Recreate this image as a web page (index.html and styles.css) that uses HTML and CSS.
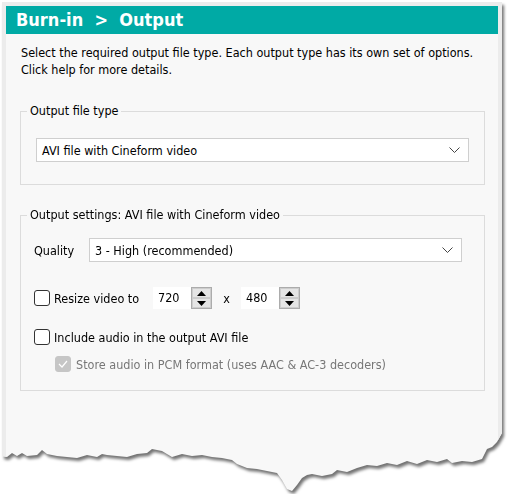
FILE: index.html
```html
<!DOCTYPE html>
<html lang="en">
<head>
    <meta charset="UTF-8">
    <title>Burn-in &gt; Output</title>
    <link rel="stylesheet" href="styles.css">
</head>
<body>

<div class="shadow">
    <div class="panel">
        <div class="header">Burn-in &nbsp;&gt;&nbsp; Output</div>

        <p class="intro">Select the required output file type. Each output type has its own set of options.<br>Click help for more details.</p>

        <fieldset class="group group-type">
            <legend>Output file type</legend>
            <div class="combo combo-type">
                <span>AVI file with Cineform video</span>
                <svg class="chevron" width="11" height="6" viewBox="0 0 11 6"><path d="M0.5 0.5 L5.5 5.5 L10.5 0.5" fill="none" stroke="#444" stroke-width="1"/></svg>
            </div>
        </fieldset>

        <fieldset class="group group-settings">
            <legend>Output settings: AVI file with Cineform video</legend>

            <div class="row quality-row">
                <label class="quality-label">Quality</label>
                <div class="combo combo-quality">
                    <span>3 - High (recommended)</span>
                    <svg class="chevron" width="11" height="6" viewBox="0 0 11 6"><path d="M0.5 0.5 L5.5 5.5 L10.5 0.5" fill="none" stroke="#444" stroke-width="1"/></svg>
                </div>
            </div>

            <div class="row resize-row">
                <span class="check"></span>
                <span class="check-text">Resize video to</span>
                <div class="spin">
                    <span class="spin-value">720</span>
                    <div class="spin-btns">
                        <div class="spin-btn"><svg width="9" height="5" viewBox="0 0 9 5"><path d="M0 5 L4.5 0 L9 5 Z" fill="#000"/></svg></div>
                        <div class="spin-btn"><svg width="9" height="5" viewBox="0 0 9 5"><path d="M0 0 L4.5 5 L9 0 Z" fill="#000"/></svg></div>
                    </div>
                </div>
                <span class="times">x</span>
                <div class="spin">
                    <span class="spin-value">480</span>
                    <div class="spin-btns">
                        <div class="spin-btn"><svg width="9" height="5" viewBox="0 0 9 5"><path d="M0 5 L4.5 0 L9 5 Z" fill="#000"/></svg></div>
                        <div class="spin-btn"><svg width="9" height="5" viewBox="0 0 9 5"><path d="M0 0 L4.5 5 L9 0 Z" fill="#000"/></svg></div>
                    </div>
                </div>
            </div>

            <div class="row audio-row">
                <span class="check"></span>
                <span class="check-text">Include audio in the output AVI file</span>
            </div>

            <div class="row pcm-row">
                <span class="check check-disabled"><svg width="10" height="8" viewBox="0 0 10 8"><path d="M1 4 L4 7 L9 1" fill="none" stroke="#fff" stroke-width="1.2"/></svg></span>
                <span class="check-text disabled">Store audio in PCM format (uses AAC &amp; AC-3 decoders)</span>
            </div>
        </fieldset>
    </div>
</div>

</body>
</html>
```

FILE: styles.css
```css
body {
    margin: 0;
    background-color: #fff;
    font-family: "DejaVu Sans Condensed", "DejaVu Sans", sans-serif;
    font-size: 12.5px;
    color: #000;
}
.shadow {
    margin: 2px 0 0 2px;
    width: 500px;
    filter: drop-shadow(2px 3px 1.5px rgba(0, 0, 0, 0.55));
}
.panel {
    height: 492px;
    background-color: #f8f8f8;
    border: 4px solid #ececec;
    border-bottom: none;
    box-sizing: border-box;
    clip-path: polygon(0 0, 100% 0, 100% 431px, 99% 440px, 98% 445px, 97% 447px, 96% 457px, 94% 460px, 92% 459px, 90% 461px, 89% 457px, 87% 460px, 85% 458px, 83% 462px, 81% 459px, 79% 463px, 77% 461px, 75% 464px, 73% 463px, 71% 466px, 69% 470px, 67% 468px, 66% 472px, 64% 474px, 62% 472px, 61% 473px, 60% 476px, 59% 483px, 58% 489px, 57% 487px, 56% 478px, 55% 471px, 53% 469px, 51% 467px, 49% 466px, 47% 462px, 46% 458px, 44% 456px, 42% 455px, 40% 453px, 38% 454px, 36% 452px, 34% 455px, 32% 449px, 30% 447px, 29% 451px, 27% 452px, 25% 455px, 23% 454px, 21% 453px, 20% 452px, 19% 455px, 17% 453px, 15% 456px, 13% 455px, 11% 454px, 9% 452px, 8% 448px, 7% 453px, 5% 454px, 4% 451px, 3% 454px, 2% 451px, 1% 455px, 0 454px);
}
.header {
    background-color: #00aaa5;
    color: #fff;
    font-weight: bold;
    font-size: 18px;
    height: 28px;
    line-height: 28px;
    padding-left: 10px;
}
.intro {
    margin: 10px 0 0 15px;
    line-height: 17px;
    color: #000;
}
.group {
    margin: 0 0 0 14px;
    width: 465px;
    box-sizing: border-box;
    border: 1px solid #dcdcdc;
    padding: 0;
}
.group legend {
    margin-left: 6px;
    padding: 0 3px;
    line-height: 16px;
}
.group-type {
    margin-top: 25px;
    height: 82px;
}
.group-settings {
    margin-top: 22px;
    height: 184px;
}
.combo {
    display: flex;
    align-items: center;
    justify-content: space-between;
    height: 24px;
    box-sizing: border-box;
    background-color: #fff;
    border: 1px solid #cfcfcf;
    padding: 0 8px 0 5px;
}
.combo-type {
    margin: 19px 0 0 15px;
    width: 433px;
}
.row {
    display: flex;
    align-items: center;
    margin-left: 13px;
}
.quality-row {
    margin-top: 15px;
}
.quality-label {
    width: 55px;
}
.combo-quality {
    width: 373px;
}
.resize-row {
    margin-top: 25px;
    height: 22px;
}
.check {
    width: 16px;
    height: 16px;
    box-sizing: border-box;
    border: 1px solid #333;
    border-radius: 3px;
    background-color: #fff;
    display: flex;
    align-items: center;
    justify-content: center;
}
.check-disabled {
    background-color: #c6c6c6;
    border-color: #c6c6c6;
}
.check-text {
    margin-left: 4px;
}
.disabled {
    color: #777;
}
.resize-row .check-text {
    width: 99px;
}
.spin {
    display: flex;
    height: 22px;
}
.spin-value {
    width: 38px;
    background-color: #fff;
    line-height: 22px;
    padding-left: 5px;
    box-sizing: border-box;
}
.spin-btns {
    display: flex;
    flex-direction: column;
    width: 21px;
    height: 22px;
    box-sizing: border-box;
    border: 1px solid #acacac;
    background-color: #e5e5e5;
}
.spin-btn {
    flex: 1;
    display: flex;
    align-items: center;
    justify-content: center;
    border: 1px solid #cdcdcd;
}
.times {
    width: 29px;
    text-align: center;
}
.audio-row {
    margin-top: 20px;
    height: 16px;
}
.pcm-row {
    margin: 11px 0 0 34px;
    height: 16px;
}
.pcm-row .check-text {
    margin-left: 5px;
}
```
